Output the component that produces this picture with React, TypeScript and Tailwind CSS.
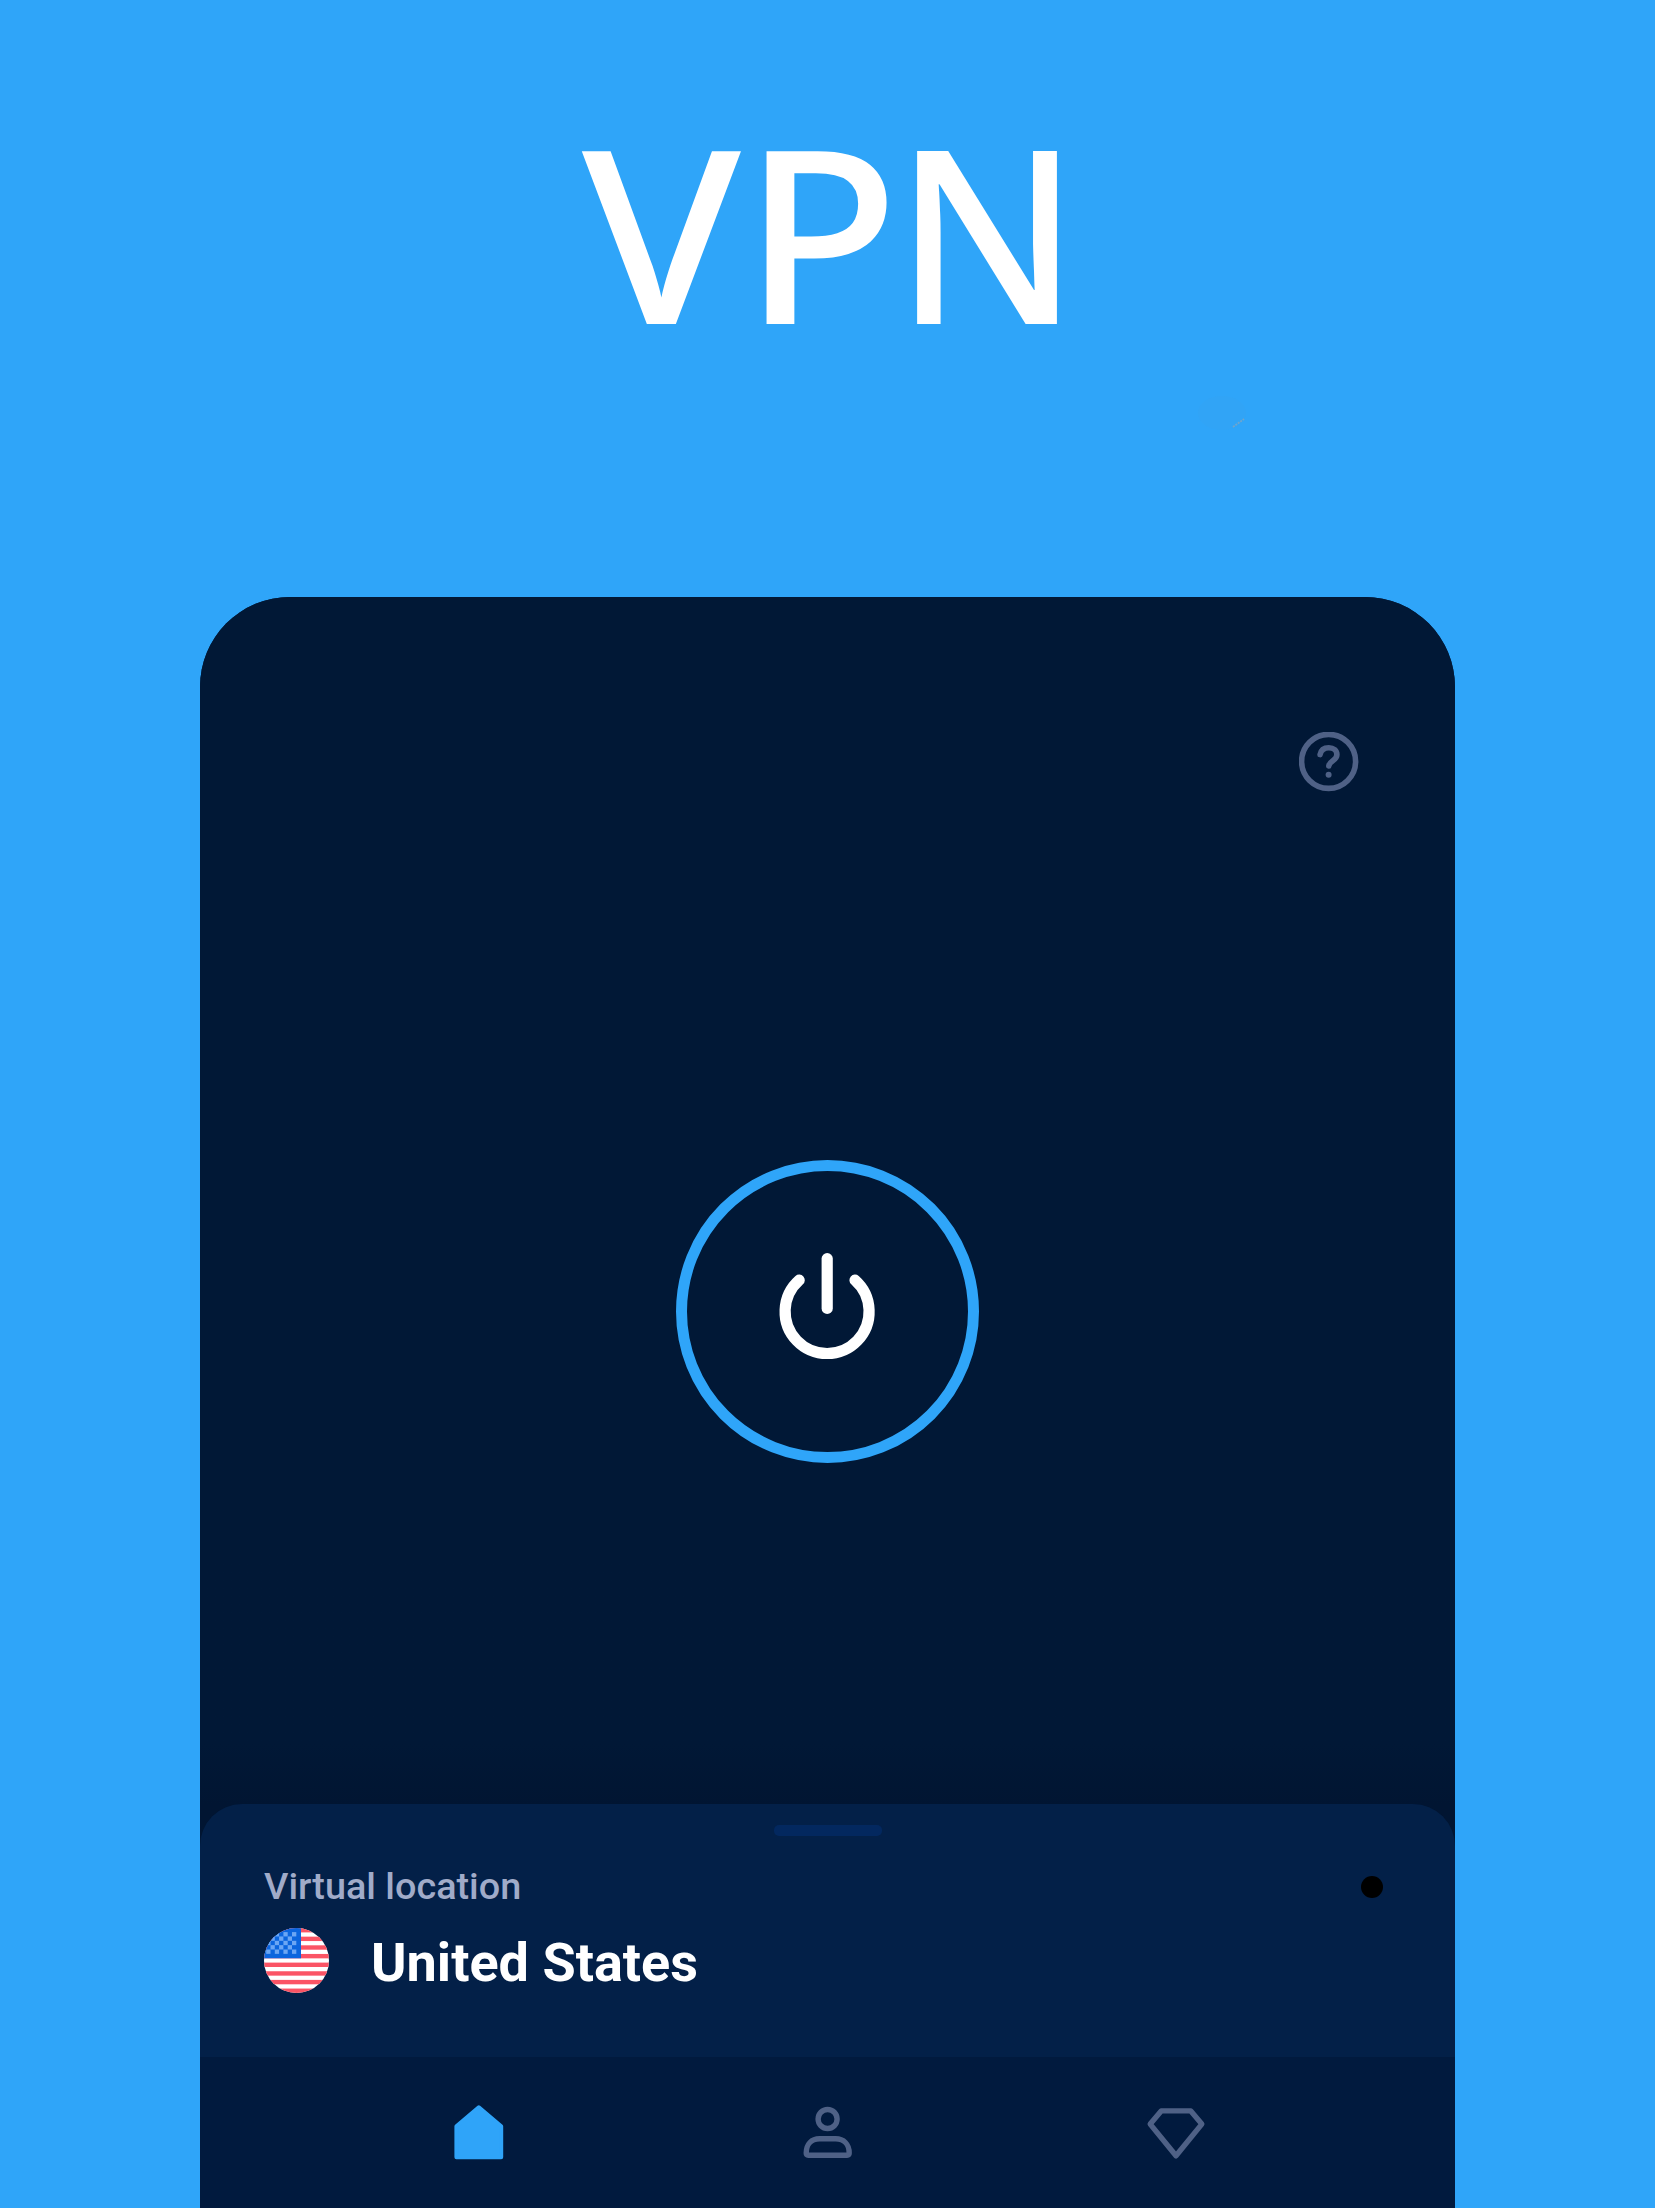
import React from "react";

function QuestionIcon() {
  return (
    <svg className="size-[60px]" viewBox="0 0 60 60" fill="none" stroke="#4f6186" strokeWidth="5.6" strokeLinecap="round" strokeLinejoin="round">
      <circle cx="29.6" cy="29.4" r="27" />
      <path d="M21.1 22.6 C21.9 18 25.2 15.7 29.8 15.7 C34.6 15.7 37.9 18.7 37.9 22.7 C37.9 28.6 30.4 28.6 29.8 34" />
      <circle cx="29.6" cy="42.8" r="3" fill="#4f6186" stroke="none" />
    </svg>
  );
}

function PowerIcon() {
  return (
    <svg className="size-[120px]" viewBox="0 0 120 120" fill="none" stroke="#fff" strokeWidth="11.2" strokeLinecap="round">
      <path d="M59.2 6.6V56.4" />
      <path d="M31.2 28.1A42 42 0 1 0 87 28.1" />
    </svg>
  );
}

const stars: number[][] = [];
for (let row = 0; row < 5; row++) {
  for (let col = 0; col < 7; col++) {
    if ((row + col) % 2 === 0) stars.push([col, row]);
  }
}

function Flag() {
  return (
    <svg className="size-[65px] shrink-0" viewBox="0 0 65 65">
      <defs>
        <clipPath id="flag-circle">
          <circle cx="32.5" cy="32.5" r="32.5" />
        </clipPath>
      </defs>
      <g clipPath="url(#flag-circle)">
        <rect width="65" height="65" fill="#fff" />
        {[0, 1, 2, 3, 4, 5, 6, 7].map((i) => (
          <rect key={i} y={i * 8.65} width="65" height="4.4" fill="#fb5465" />
        ))}
        <rect width="37" height="30.3" fill="#0b65de" />
        {stars.map(([c, r]) => (
          <rect key={`${c}-${r}`} x={2.2 + c * 4.3} y={4.1 + r * 4.35} width="4.3" height="4.35" fill="#6ba6f4" />
        ))}
      </g>
    </svg>
  );
}

function HomeIcon() {
  return (
    <svg className="size-[64px]" viewBox="0 0 64 64" fill="#2fa4f9" stroke="#2fa4f9" strokeWidth="4" strokeLinejoin="round">
      <path d="M9.4 28.2L31.8 9.2L54.2 28.2V59.2H9.4Z" />
    </svg>
  );
}

function PersonIcon() {
  return (
    <svg className="size-[64px]" viewBox="0 0 64 64" fill="none" stroke="#4f6186" strokeWidth="5.4" strokeLinejoin="round">
      <circle cx="31.6" cy="21" r="9.5" />
      <path d="M10.2 55.1C10.2 46 15.6 40.8 23.6 40.8H39.6C47.6 40.8 53.2 46 53.2 55.1Q53.2 57.2 51.1 57.2H12.3Q10.2 57.2 10.2 55.1Z" />
    </svg>
  );
}

function DiamondIcon() {
  return (
    <svg className="size-[64px]" viewBox="0 0 64 64" fill="none" stroke="#4f6186" strokeWidth="5.4" strokeLinejoin="round">
      <path d="M17.2 12.9H46.8L57.8 26.1L32 57.8L6.2 26.1Z" />
    </svg>
  );
}

export default function App() {
  return (
    <div className="flex h-[2208px] w-[1655px] flex-col items-center overflow-hidden bg-[#2fa5f9] font-['Roboto',sans-serif]">
      <header className="relative flex h-[597px] w-full shrink-0 justify-center">
        <h1 className="mt-[65px] ml-[-15px] flex h-[330px] font-['Noto_Sans',sans-serif] text-[242px] leading-[330px] font-medium text-white">
          <span className="inline-block translate-x-[9px] scale-x-[1.07]">V</span>
          <span className="inline-block translate-x-[20px] scale-x-[1.06]">P</span>
          <span className="inline-block translate-x-[19px] scale-x-[0.985]">N</span>
        </h1>
        <svg className="absolute top-[390px] left-[1195px] h-[50px] w-[60px]" viewBox="0 0 60 50">
          <ellipse cx="27" cy="23" rx="24" ry="17" fill="#38a2ef" opacity="0.3" />
          <path d="M38 37L49 29" stroke="#7fa6c4" strokeWidth="1.8" strokeDasharray="2 1" opacity="0.8" />
        </svg>
      </header>

      <main className="flex w-[1255px] grow flex-col overflow-hidden rounded-t-[90px] bg-[#011836]">
        <section className="flex h-[1207px] shrink-0 flex-col items-center bg-linear-to-b from-[#011836] from-95% to-[#011532]">
          <button className="mt-[135px] mr-[96px] size-[60px] self-end" aria-label="Help">
            <QuestionIcon />
          </button>
          <button className="mt-[368px] flex size-[303px] items-center justify-center rounded-full border-[11px] border-[#2fa5f9]" aria-label="Connect">
            <PowerIcon />
          </button>
        </section>

        <section className="flex h-[253px] shrink-0 flex-col bg-[#011532]">
          <div className="flex h-full flex-col rounded-t-[42px] bg-[#032048] pr-16 pl-16">
            <div className="mt-[21px] h-[11px] w-[108px] self-center rounded-[5px] bg-[#03285f]" />
            <div className="mt-[27px] flex h-12 items-center justify-between">
              <span className="-mt-[2px] text-[37.8px] leading-[48px] font-medium text-[#a0abc9]">Virtual location</span>
              <span className="mr-[8px] size-[22px] rounded-full bg-black" />
            </div>
            <div className="mt-[14px] flex h-[70px] items-center gap-[42px]">
              <Flag />
              <span className="mt-[6px] text-[54px] leading-[70px] font-bold text-white">United States</span>
            </div>
          </div>
        </section>

        <nav className="flex grow items-start justify-between bg-[#011a3e] px-[247px] pt-[41px]">
          <HomeIcon />
          <PersonIcon />
          <DiamondIcon />
        </nav>
      </main>
    </div>
  );
}
